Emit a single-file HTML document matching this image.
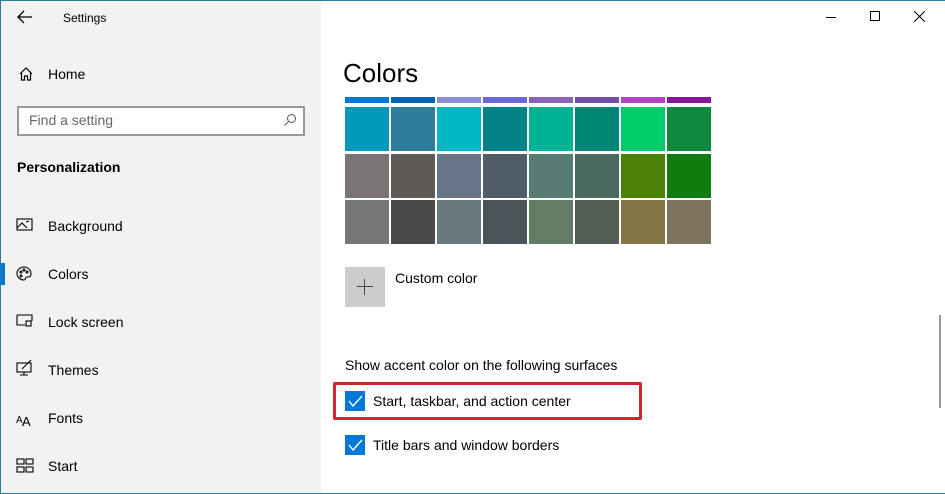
<!DOCTYPE html>
<html><head><meta charset="utf-8"><style>
*{margin:0;padding:0;box-sizing:border-box}
body{width:945px;height:494px;overflow:hidden;background:#fff;font-family:"Liberation Sans",sans-serif;color:#000;position:relative}
.frame{position:absolute;inset:0;border:1px solid #2b7a9a;border-right:none}
.side{position:absolute;left:1px;top:1px;width:320px;height:492px;background:#f2f2f2}
.t{position:absolute;white-space:nowrap}
.sw{position:absolute;width:44px}
.cb{position:absolute;left:345px;width:20px;height:20px;background:#0078d7}
</style></head><body>
<div class="side"></div>
<div class="frame"></div>
<svg class="t" style="left:17px;top:10px" width="16" height="14"><path d="M15 7H2M7 1L1 7l6 6" stroke="#000" stroke-width="1.3" fill="none"/></svg>
<div class="t" style="left:63px;top:11px;font-size:12px">Settings</div>
<svg class="t" style="left:18px;top:66px" width="16" height="16"><path d="M2 8L8 2l6 6M3.5 7v7h3v-4h3v4h3V7" stroke="#000" stroke-width="1.2" fill="none"/></svg>
<div class="t" style="left:48px;top:66px;font-size:14px">Home</div>
<div class="t" style="left:17px;top:106px;width:288px;height:30px;border:2px solid #999;background:#fff"></div>
<div class="t" style="left:29px;top:112px;font-size:14px;color:#666">Find a setting</div>
<svg class="t" style="left:283px;top:113px" width="14" height="14"><circle cx="8.5" cy="5.5" r="4" stroke="#555" fill="none"/><path d="M5.5 8.5L1.5 12.5" stroke="#555"/></svg>
<div class="t" style="left:17px;top:159px;font-size:14px;font-weight:bold">Personalization</div>
<div class="t" style="left:1px;top:263px;width:4px;height:22px;background:#0078d7"></div>
<svg class="t" style="left:16px;top:218px" width="20" height="260" fill="none" stroke="#000" stroke-width="1.1">
<rect x="1" y="1" width="15" height="11"/><path d="M1 10l5-5 5 5M10 4l3-1"/>
<path d="M8 49c-4 0-7 3-7 6.5S4 62 8 62c2 0 1-3 3-3s4 0 4-3c0-4-3-7-7-7z"/>
<circle cx="5" cy="54" r="1"/><circle cx="8" cy="52" r="1"/><circle cx="11" cy="54" r="1"/><circle cx="5" cy="58" r="1"/>
<path d="M1 97h15v6M1 97v10h8"/><rect x="10" y="103" width="5" height="5"/>
<rect x="1" y="145" width="14" height="9"/><path d="M8 154v3M4 157h8M6 151l9-9"/>
<text x="0" y="205" font-size="10" fill="#000" stroke="none" font-family="Liberation Sans">A</text><text x="6" y="208" font-size="13" fill="#000" stroke="none" font-family="Liberation Sans">A</text>
<rect x="1" y="241" width="7" height="5"/><rect x="10" y="241" width="7" height="5"/><rect x="1" y="249" width="7" height="5"/><rect x="10" y="249" width="7" height="5"/>
</svg>
<div class="t" style="left:48px;top:218px;font-size:14px">Background</div>
<div class="t" style="left:48px;top:266px;font-size:14px">Colors</div>
<div class="t" style="left:48px;top:314px;font-size:14px">Lock screen</div>
<div class="t" style="left:48px;top:362px;font-size:14px">Themes</div>
<div class="t" style="left:48px;top:410px;font-size:14px">Fonts</div>
<div class="t" style="left:48px;top:458px;font-size:14px">Start</div>

<div class="t" style="left:826px;top:17px;width:10px;height:1px;background:#000"></div>
<div class="t" style="left:870px;top:11px;width:10px;height:10px;border:1px solid #000"></div>
<svg class="t" style="left:914px;top:11px" width="11" height="11"><path d="M0 0l11 11M11 0L0 11" stroke="#000"/></svg>

<div class="t" style="left:343px;top:58px;font-size:26px">Colors</div>
<div id="g"></div>
<script>
var c=[["#0078d7","#0063b1","#8e8cd8","#6b69d6","#8764b8","#744da9","#b146c2","#881798"],
["#0099bc","#2d7d9a","#00b7c3","#038387","#00b294","#018574","#00cc6a","#10893e"],
["#7a7574","#5d5a58","#68768a","#515c6b","#567c73","#486860","#498205","#107c10"],
["#767676","#4c4a48","#69797e","#4a5459","#647c64","#525e54","#847545","#7e735f"]];
var ys=[[97,6],[107,44],[154,44],[200,44]],h="";
for(var r=0;r<4;r++)for(var i=0;i<8;i++)h+='<div class="sw" style="left:'+(345+i*46)+'px;top:'+ys[r][0]+'px;height:'+ys[r][1]+'px;background:'+c[r][i]+'"></div>';
document.getElementById("g").innerHTML=h;
</script>
<div class="t" style="left:345px;top:267px;width:40px;height:40px;background:#ccc"></div>
<div class="t" style="left:357px;top:286px;width:16px;height:1px;background:#444"></div>
<div class="t" style="left:364px;top:279px;width:1px;height:16px;background:#444"></div>
<div class="t" style="left:395px;top:270px;font-size:14px">Custom color</div>
<div class="t" style="left:345px;top:357px;font-size:14px">Show accent color on the following surfaces</div>
<div class="t" style="left:333px;top:382px;width:309px;height:38px;border:3px solid #d3232e;border-radius:2px"></div>
<div class="cb" style="top:391px"></div>
<div class="cb" style="top:435px"></div>
<svg class="t" style="left:345px;top:391px" width="20" height="64"><path d="M4 10l4 5 9-10M4 54l4 5 9-10" stroke="#fff" stroke-width="1.4" fill="none"/></svg>
<div class="t" style="left:373px;top:393px;font-size:14px">Start, taskbar, and action center</div>
<div class="t" style="left:373px;top:437px;font-size:14px">Title bars and window borders</div>
<div class="t" style="left:939px;top:315px;width:2px;height:93px;background:#999"></div>
</body></html>
